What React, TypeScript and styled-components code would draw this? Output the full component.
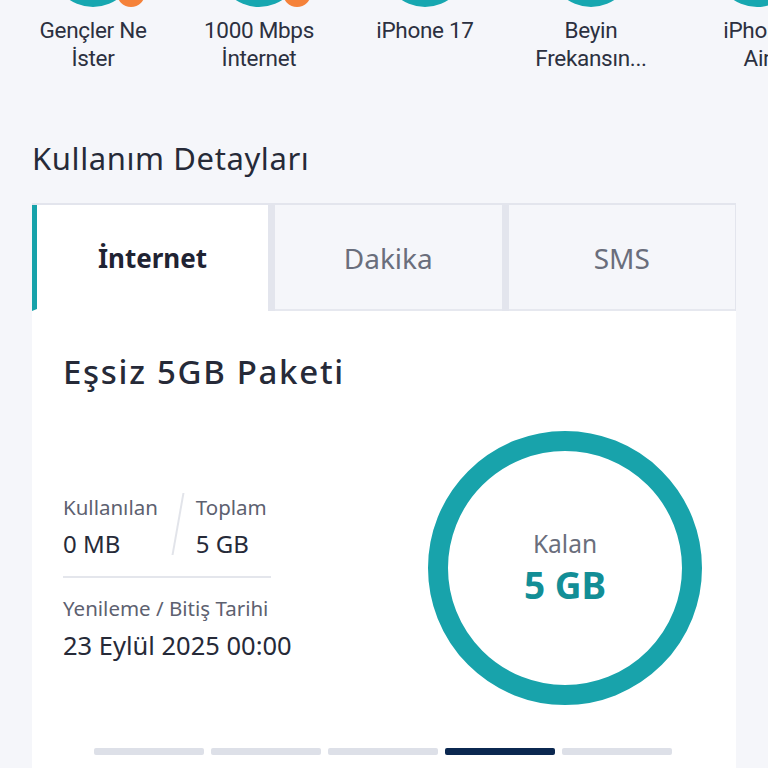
import React from "react";
import styled, { createGlobalStyle } from "styled-components";

const Global = createGlobalStyle`
  html, body { margin: 0; padding: 0; background: #f5f6fa; overflow: hidden; }
  body { font-family: "Noto Sans", "Open Sans", sans-serif; color: #262a38; }
  * { box-sizing: border-box; }
`;

const Page = styled.div`
  width: 768px;
  height: 768px;
  overflow: hidden;
  display: flex;
  flex-direction: column;
`;

const StoryRow = styled.div`
  display: flex;
  padding-left: 10px;
  width: 900px;
`;

const Story = styled.div`
  width: 166px;
  flex: 0 0 166px;
  display: flex;
  flex-direction: column;
  align-items: center;
`;

const StoryCircle = styled.div`
  position: relative;
  width: 84px;
  height: 84px;
  margin-top: -77px;
  border-radius: 50%;
  background: #17a7b0;
`;

const Badge = styled.div`
  position: absolute;
  left: 66px;
  bottom: 0;
  width: 28px;
  height: 28px;
  border-radius: 50%;
  background: #f5823a;
`;

const StoryLabel = styled.div`
  margin-top: 9px;
  font-family: "Roboto", "Noto Sans", sans-serif;
  font-size: 22.5px;
  line-height: 28px;
  color: #2c3040;
  text-align: center;
  letter-spacing: -0.3px;
  white-space: pre-line;
`;

const Section = styled.div`
  padding: 0 32px;
  display: flex;
  flex-direction: column;
`;

const Heading = styled.h2`
  margin: 66px 0 25px;
  font-size: 31px;
  line-height: 40px;
  font-weight: 400;
  letter-spacing: 0.6px;
  color: #262a38;
`;

const Tabs = styled.div`
  display: grid;
  grid-template-columns: 236px 1fr 1fr;
  gap: 7px;
  background: #e3e5ed;
  padding: 2px 1px 0 0;
  height: 108px;
`;

const Tab = styled.div<{ $active?: boolean }>`
  display: flex;
  align-items: center;
  justify-content: center;
  padding-top: 2px;
  background: ${(p) => (p.$active ? "#ffffff" : "#f5f6fa")};
  border-left: ${(p) => (p.$active ? "5px solid #16a2aa" : "none")};
  border-bottom: 2px solid ${(p) => (p.$active ? "#ffffff" : "#e6e8ef")};
  font-size: ${(p) => (p.$active ? "26px" : "28px")};
  font-weight: ${(p) => (p.$active ? 700 : 400)};
  color: ${(p) => (p.$active ? "#1f2333" : "#6a6e7c")};
`;

const Card = styled.div`
  background: #ffffff;
  padding: 39px 34px 0 31px;
  display: flex;
  flex-direction: column;
  height: 470px;
`;

const Title = styled.h3`
  margin: 0;
  font-size: 33px;
  line-height: 44px;
  font-weight: 500;
  letter-spacing: 1.7px;
  color: #262a38;
`;

const Content = styled.div`
  display: flex;
  align-items: flex-start;
  justify-content: space-between;
  margin-top: 37px;
`;

const Info = styled.div`
  display: flex;
  flex-direction: column;
  padding-top: 62px;
`;

const UsageRow = styled.div`
  display: flex;
  align-items: stretch;
  width: 208px;
  padding-bottom: 17px;
  border-bottom: 2px solid #e4e6ec;
`;

const UsageCol = styled.div`
  display: flex;
  flex-direction: column;
`;

const Slash = styled.div`
  width: 2px;
  margin: 0 17px 4px 19px;
  background: #e2e4ea;
  transform: skewX(-10deg);
`;

const Label = styled.div`
  font-size: 20.5px;
  line-height: 28px;
  color: #5d6170;
`;

const Value = styled.div<{ $big?: boolean }>`
  font-size: ${(p) => (p.$big ? "25.5px" : "24px")};
  line-height: ${(p) => (p.$big ? "32px" : "30px")};
  margin-top: ${(p) => (p.$big ? "7px" : "8px")};
  color: #262a38;
`;

const Renewal = styled.div`
  display: flex;
  flex-direction: column;
  padding-top: 16px;
`;

const Ring = styled.div`
  width: 274px;
  height: 274px;
  border-radius: 50%;
  border: 20px solid #18a3ab;
  display: flex;
  flex-direction: column;
  align-items: center;
  justify-content: center;
`;

const RingLabel = styled.div`
  font-size: 24.5px;
  line-height: 30px;
  color: #6a6e7c;
`;

const RingValue = styled.div`
  font-size: 37px;
  line-height: 44px;
  margin-top: 4px;
  font-weight: 700;
  color: #128e96;
`;

const Dots = styled.div`
  display: flex;
  justify-content: center;
  gap: 7px;
  margin-top: 43px;
`;

const Dot = styled.div<{ $active?: boolean }>`
  width: 110px;
  height: 7px;
  border-radius: 2px;
  background: ${(p) => (p.$active ? "#0b2850" : "#dde0e8")};
`;

const stories = [
  { label: "Gençler Ne\nİster", badge: true },
  { label: "1000 Mbps\nİnternet", badge: true },
  { label: "iPhone 17", badge: false },
  { label: "Beyin\nFrekansın...", badge: false },
  { label: "iPhone\nAir", badge: false },
];

export default function App() {
  return (
    <Page>
      <Global />
      <StoryRow>
        {stories.map((s) => (
          <Story key={s.label}>
            <StoryCircle>{s.badge && <Badge />}</StoryCircle>
            <StoryLabel>{s.label}</StoryLabel>
          </Story>
        ))}
      </StoryRow>
      <Section>
        <Heading>Kullanım Detayları</Heading>
        <Tabs>
          <Tab $active>İnternet</Tab>
          <Tab>Dakika</Tab>
          <Tab>SMS</Tab>
        </Tabs>
        <Card>
          <Title>Eşsiz 5GB Paketi</Title>
          <Content>
            <Info>
              <UsageRow>
                <UsageCol>
                  <Label>Kullanılan</Label>
                  <Value>0 MB</Value>
                </UsageCol>
                <Slash />
                <UsageCol>
                  <Label>Toplam</Label>
                  <Value>5 GB</Value>
                </UsageCol>
              </UsageRow>
              <Renewal>
                <Label>Yenileme / Bitiş Tarihi</Label>
                <Value $big>23 Eylül 2025 00:00</Value>
              </Renewal>
            </Info>
            <Ring>
              <RingLabel>Kalan</RingLabel>
              <RingValue>5 GB</RingValue>
            </Ring>
          </Content>
          <Dots>
            {[0, 1, 2, 3, 4].map((i) => (
              <Dot key={i} $active={i === 3} />
            ))}
          </Dots>
        </Card>
      </Section>
    </Page>
  );
}
